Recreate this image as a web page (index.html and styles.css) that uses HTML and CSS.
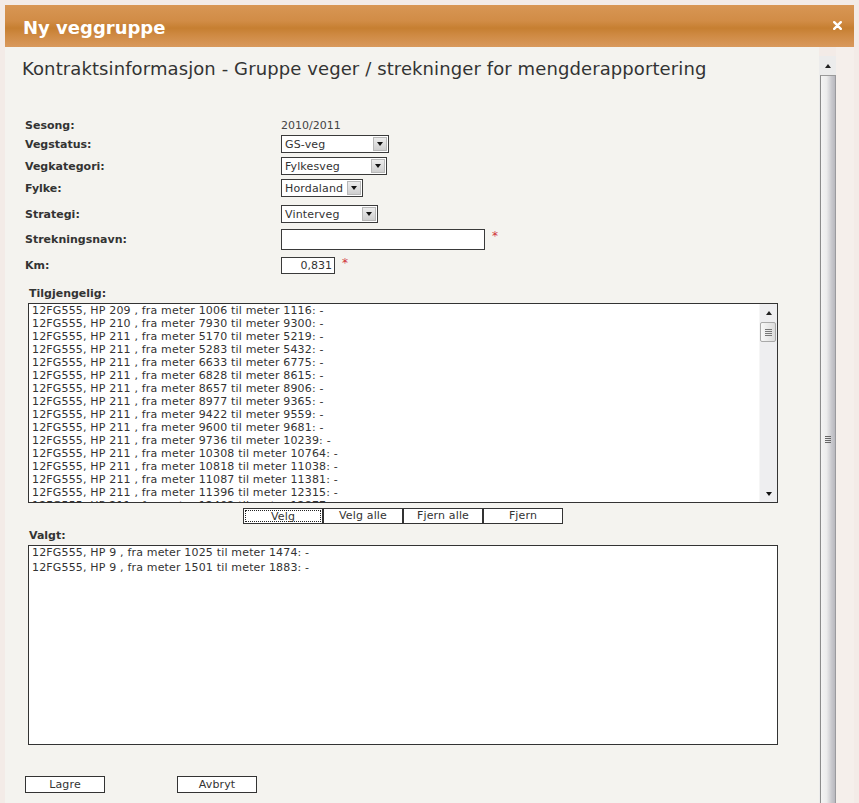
FILE: index.html
```html
<!DOCTYPE html>
<html lang="no">
<head>
<meta charset="utf-8">
<title>Ny veggruppe</title>
<link rel="stylesheet" href="styles.css">
</head>
<body>
<div class="dialog">
  <div class="titlebar">
    <span class="title">Ny veggruppe</span>
    <span class="close"><svg width="9" height="9" viewBox="0 0 9 9"><path d="M1.2 1.2 L7.8 7.8 M7.8 1.2 L1.2 7.8" stroke="#fff" stroke-width="2.4" stroke-linecap="round"/></svg></span>
  </div>
  <div class="body">
    <div class="content">
      <h1 class="heading">Kontraktsinformasjon - Gruppe veger / strekninger for mengderapportering</h1>
      <div class="form">
        <div class="row r-sesong"><span class="label">Sesong:</span><span class="value">2010/2011</span></div>
        <div class="row r-vegstatus"><span class="label">Vegstatus:</span><span class="select w108"><span class="opt">GS-veg</span><span class="drop"><i class="tri"></i></span></span></div>
        <div class="row r-vegkat"><span class="label">Vegkategori:</span><span class="select w106"><span class="opt">Fylkesveg</span><span class="drop"><i class="tri"></i></span></span></div>
        <div class="row r-fylke"><span class="label">Fylke:</span><span class="select w82"><span class="opt">Hordaland</span><span class="drop"><i class="tri"></i></span></span></div>
        <div class="row r-strategi"><span class="label">Strategi:</span><span class="select w97"><span class="opt">Vinterveg</span><span class="drop"><i class="tri"></i></span></span></div>
        <div class="row r-navn"><span class="label">Strekningsnavn:</span><span class="field"><span class="textbox tb-navn"></span><span class="req req-navn">*</span></span></div>
        <div class="row r-km"><span class="label">Km:</span><span class="field"><span class="textbox tb-km">0,831</span><span class="req">*</span></span></div>
      </div>
      <div class="section-label">Tilgjengelig:</div>
      <div class="listbox lb-avail">
        <div class="items">
          <div class="item">12FG555, HP 209 , fra meter 1006 til meter 1116: -</div>
          <div class="item">12FG555, HP 210 , fra meter 7930 til meter 9300: -</div>
          <div class="item">12FG555, HP 211 , fra meter 5170 til meter 5219: -</div>
          <div class="item">12FG555, HP 211 , fra meter 5283 til meter 5432: -</div>
          <div class="item">12FG555, HP 211 , fra meter 6633 til meter 6775: -</div>
          <div class="item">12FG555, HP 211 , fra meter 6828 til meter 8615: -</div>
          <div class="item">12FG555, HP 211 , fra meter 8657 til meter 8906: -</div>
          <div class="item">12FG555, HP 211 , fra meter 8977 til meter 9365: -</div>
          <div class="item">12FG555, HP 211 , fra meter 9422 til meter 9559: -</div>
          <div class="item">12FG555, HP 211 , fra meter 9600 til meter 9681: -</div>
          <div class="item">12FG555, HP 211 , fra meter 9736 til meter 10239: -</div>
          <div class="item">12FG555, HP 211 , fra meter 10308 til meter 10764: -</div>
          <div class="item">12FG555, HP 211 , fra meter 10818 til meter 11038: -</div>
          <div class="item">12FG555, HP 211 , fra meter 11087 til meter 11381: -</div>
          <div class="item">12FG555, HP 211 , fra meter 11396 til meter 12315: -</div>
          <div class="item partial">12FG555, HP 211 , fra meter 12402 til meter 12877: -</div>
        </div>
        <div class="vscroll">
          <div class="arrow up"><i class="tri-up"></i></div>
          <div class="track">
            <div class="thumb"><span class="grip"></span></div>
          </div>
          <div class="arrow down"><i class="tri"></i></div>
        </div>
      </div>
      <div class="btnrow">
        <span class="btn focused"><span class="focus">Velg</span></span>
        <span class="btn">Velg alle</span>
        <span class="btn">Fjern alle</span>
        <span class="btn">Fjern</span>
      </div>
      <div class="section-label">Valgt:</div>
      <div class="listbox lb-chosen">
        <div class="items chosen">
          <div class="item">12FG555, HP 9 , fra meter 1025 til meter 1474: -</div>
          <div class="item">12FG555, HP 9 , fra meter 1501 til meter 1883: -</div>
        </div>
      </div>
      <div class="actions">
        <span class="btn act">Lagre</span>
        <span class="btn act">Avbryt</span>
      </div>
    </div>
    <div class="pagescroll">
      <div class="ps-arrow"><i class="tri-up small"></i></div>
      <div class="ps-thumb"><span class="ps-grip"></span></div>
    </div>
    <div class="strip"></div>
  </div>
</div>
</body>
</html>
```
FILE: styles.css
```css
html, body {
  margin: 0;
  padding: 0;
  height: 100%;
  overflow: hidden;
}
body {
  background: #f3ebe7;
  font-family: "DejaVu Sans", Verdana, sans-serif;
  color: #333;
}
.dialog {
  margin: 5px 5px 0 5px;
  height: 798px;
  display: flex;
  flex-direction: column;
}
.titlebar {
  height: 42px;
  flex: none;
  display: flex;
  align-items: center;
  justify-content: space-between;
  padding: 0 12px 0 18px;
  background: linear-gradient(to bottom, #d89654 0%, #d18c46 38%, #c67f31 55%, #cf8a43 72%, #d9995d 100%);
}
.title {
  color: #fff;
  font-weight: bold;
  font-size: 18px;
  margin-top: 2px;
}
.close {
  display: flex;
  margin-top: -2px;
}
.body {
  flex: 1;
  display: flex;
  min-height: 0;
}
.content {
  width: 794px;
  flex: none;
  background: #f4f3ef;
  padding: 11px 0 0 20px;
  overflow: hidden;
}
.heading {
  margin: 0 0 0 -3px;
  font-weight: normal;
  font-size: 18px;
  line-height: 22px;
  letter-spacing: 0.1px;
  color: #333;
  white-space: nowrap;
}
.form {
  margin-top: 36px;
  font-size: 11px;
}
.row {
  display: grid;
  grid-template-columns: 256px auto;
  align-items: center;
  height: 18px;
}
.label {
  font-weight: bold;
  color: #333;
}
.value {
  color: #444;
}
.r-vegstatus { margin-top: 1px; }
.r-vegkat { margin-top: 4px; }
.r-fylke { margin-top: 4px; }
.r-strategi { margin-top: 8px; }
.r-navn { margin-top: 6px; height: 21px; }
.r-km { margin-top: 7px; height: 17px; }
.select {
  display: flex;
  align-items: center;
  justify-content: space-between;
  box-sizing: border-box;
  height: 18px;
  border: 1px solid #3a3a3a;
  background: #fff;
  padding: 0 1px 0 3px;
  color: #333;
  letter-spacing: 0.15px;
}
.w108 { width: 108px; }
.w106 { width: 106px; }
.w82 { width: 82px; }
.w97 { width: 97px; }
.drop {
  width: 14px;
  height: 14px;
  box-sizing: border-box;
  border: 1px solid #b8b8b8;
  background: linear-gradient(to bottom, #ececec, #cfcfcf);
  display: flex;
  align-items: center;
  justify-content: center;
}
.tri {
  display: block;
  width: 0;
  height: 0;
  border-left: 3.5px solid transparent;
  border-right: 3.5px solid transparent;
  border-top: 4px solid #111;
}
.tri-up {
  display: block;
  width: 0;
  height: 0;
  border-left: 3.5px solid transparent;
  border-right: 3.5px solid transparent;
  border-bottom: 4px solid #222;
}
.field {
  display: flex;
  align-items: flex-start;
}
.textbox {
  box-sizing: border-box;
  border: 1px solid #3a3a3a;
  background: #fff;
  display: block;
}
.tb-navn {
  width: 204px;
  height: 21px;
}
.tb-km {
  width: 54px;
  height: 17px;
  text-align: right;
  line-height: 15px;
  padding-right: 2px;
  color: #333;
}
.req {
  color: #d0333b;
  margin-left: 7px;
  font-size: 12px;
  line-height: 12px;
  margin-top: 0;
}
.req-navn {
  margin-top: 1px;
}
.section-label {
  font-size: 11px;
  line-height: 13px;
  font-weight: bold;
  margin-left: 4px;
  color: #333;
}
.form + .section-label {
  margin-top: 13px;
}
.listbox {
  margin-left: 3px;
  margin-top: 3px;
  width: 750px;
  height: 200px;
  box-sizing: border-box;
  border: 1px solid #333;
  background: #fff;
  display: flex;
  font-size: 11px;
}
.items {
  flex: 1;
  overflow: hidden;
  padding: 0 0 0 3px;
}
.item {
  line-height: 13px;
  white-space: nowrap;
  color: #333;
  letter-spacing: 0.17px;
}
.item.partial {
  height: 3px;
  overflow: hidden;
}
.chosen {
  margin-top: -1px;
}
.chosen .item {
  line-height: 15px;
}
.vscroll {
  width: 17px;
  flex: none;
  display: flex;
  flex-direction: column;
  background: #eeeef0;
  border-left: 1px solid #f6f6f6;
}
.arrow {
  height: 17px;
  display: flex;
  align-items: center;
  justify-content: center;
  flex: none;
}
.track {
  flex: 1;
  padding-top: 1px;
}
.thumb {
  height: 20px;
  margin: 0 1px 0 0;
  box-sizing: border-box;
  border: 1px solid #a9a9a9;
  border-radius: 2px;
  background: linear-gradient(to right, #f8f8f8, #dcdcdc);
  display: flex;
  align-items: center;
  justify-content: center;
}
.grip {
  width: 7px;
  height: 7px;
  background: repeating-linear-gradient(to bottom, #777 0, #777 1px, transparent 1px, transparent 2px);
}
.btnrow {
  display: flex;
  margin: 5px 0 0 218px;
}
.btn {
  box-sizing: border-box;
  width: 80px;
  height: 16px;
  border: 1px solid #333;
  background: #fff;
  font-size: 11px;
  line-height: 14px;
  text-align: center;
  color: #333;
  display: flex;
  align-items: center;
  justify-content: center;
  letter-spacing: 0.15px;
}
.btn.focused {
  padding: 1px;
}
.focus {
  display: block;
  width: 100%;
  height: 100%;
  box-sizing: border-box;
  border: 1px dotted #222;
  line-height: 11px;
}
.btnrow + .section-label {
  margin-top: 5px;
}
.actions {
  display: flex;
  gap: 72px;
  margin-top: 31px;
}
.btn.act {
  height: 17px;
}
.pagescroll {
  width: 17px;
  flex: none;
  margin-top: 9px;
  display: flex;
  flex-direction: column;
  background: #ececec;
}
.ps-arrow {
  height: 19px;
  display: flex;
  align-items: center;
  justify-content: center;
  flex: none;
}
.ps-thumb {
  flex: 1;
  box-sizing: border-box;
  border-left: 1px solid #8c8c8c;
  border-right: 1px solid #9a9a9e;
  border-top: 1px solid #9a9a9a;
  background: linear-gradient(to right, #f4f4f4 0%, #ececec 40%, #c9c9ce 75%, #b8b8be 100%);
  display: flex;
  align-items: center;
  justify-content: center;
  margin-left: 1px;
}
.ps-grip {
  width: 6px;
  height: 8px;
  background: repeating-linear-gradient(to bottom, #666 0, #666 1px, transparent 1px, transparent 2px);
}
.strip {
  flex: 1;
  background: #f5efeb;
}
```
